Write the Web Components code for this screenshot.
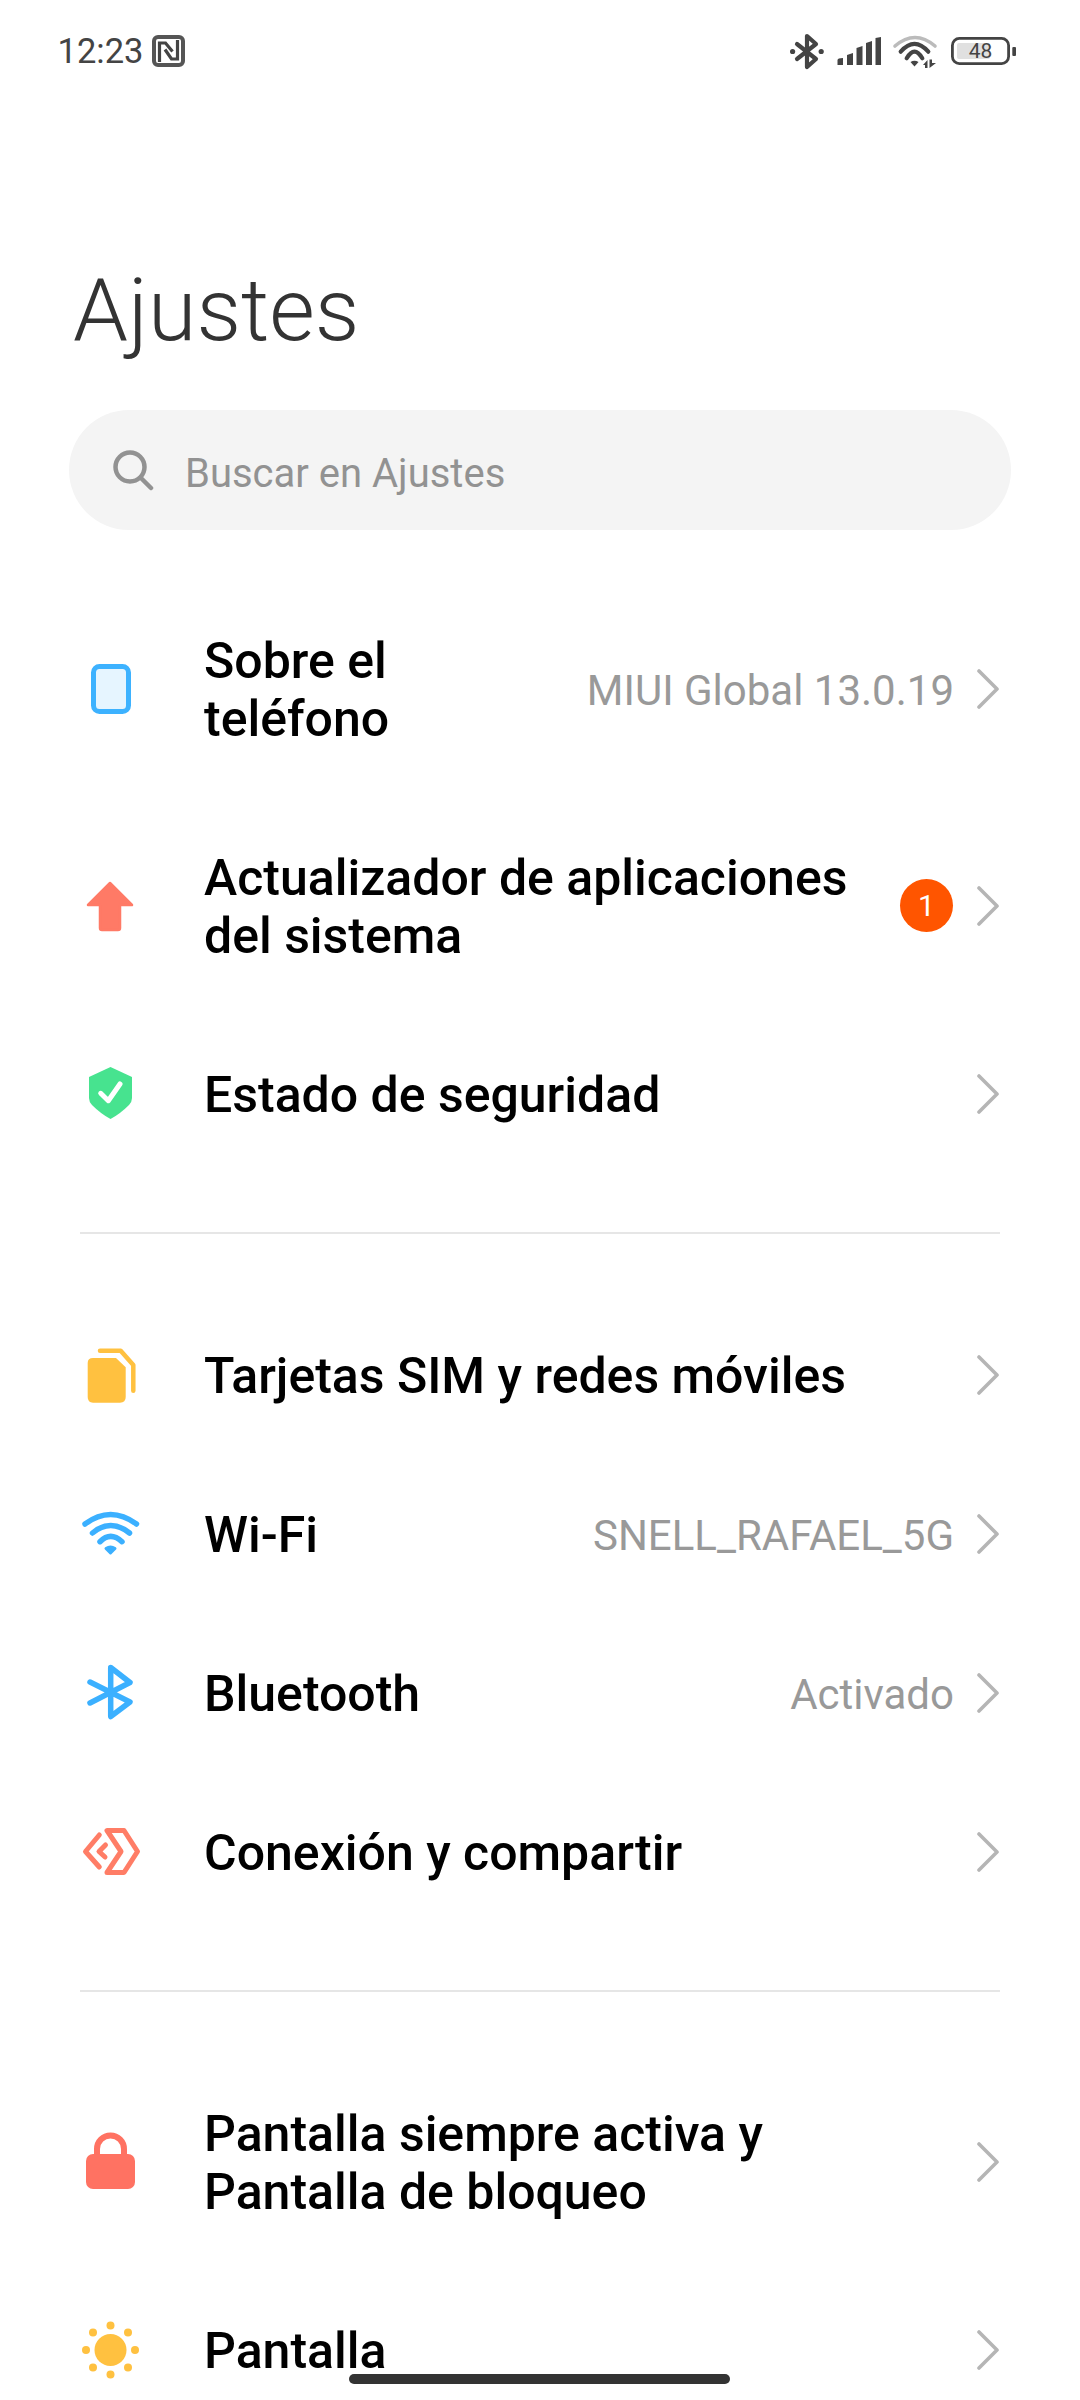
<!DOCTYPE html>
<html lang="es">
<head>
<meta charset="utf-8">
<title>Ajustes</title>
<style>
  html, body { margin: 0; background: #fff; }
  settings-section:first-of-type { padding-top: 50px; }
</style>
</head>
<body>
<settings-screen>
  <status-bar time="12:23" battery="48"></status-bar>
  <page-title>Ajustes</page-title>
  <search-box placeholder="Buscar en Ajustes"></search-box>

  <settings-section>
    <settings-row>
      <app-icon slot="icon" name="phone"></app-icon>
      Sobre el<br>teléfono
      <span slot="value">MIUI Global 13.0.19</span>
    </settings-row>
    <settings-row>
      <app-icon slot="icon" name="update"></app-icon>
      Actualizador de aplicaciones<br>del sistema
      <count-badge slot="value">1</count-badge>
    </settings-row>
    <settings-row>
      <app-icon slot="icon" name="shield"></app-icon>
      Estado de seguridad
    </settings-row>
  </settings-section>

  <section-divider></section-divider>

  <settings-section>
    <settings-row>
      <app-icon slot="icon" name="sim"></app-icon>
      Tarjetas SIM y redes móviles
    </settings-row>
    <settings-row>
      <app-icon slot="icon" name="wifi"></app-icon>
      Wi-Fi
      <span slot="value">SNELL_RAFAEL_5G</span>
    </settings-row>
    <settings-row>
      <app-icon slot="icon" name="bluetooth"></app-icon>
      Bluetooth
      <span slot="value">Activado</span>
    </settings-row>
    <settings-row>
      <app-icon slot="icon" name="share"></app-icon>
      Conexión y compartir
    </settings-row>
  </settings-section>

  <section-divider></section-divider>

  <settings-section>
    <settings-row>
      <app-icon slot="icon" name="lock"></app-icon>
      Pantalla siempre activa y<br>Pantalla de bloqueo
    </settings-row>
    <settings-row>
      <app-icon slot="icon" name="sun"></app-icon>
      Pantalla
    </settings-row>
  </settings-section>

  <home-bar></home-bar>
</settings-screen>

<script>
const ICONS = {
  phone: `<rect x="15.5" y="9.5" width="35" height="45" rx="6" fill="#e6f5ff" stroke="#3db2ff" stroke-width="5"/>`,
  update: `<path d="M32 9 L54 31 H42 V54 Q42 56 40 56 H24 Q22 56 22 54 V31 H10 Z" fill="#ff7a66" stroke="#ff7a66" stroke-width="2.5" stroke-linejoin="round"/>`,
  shield: `<path d="M32.5 5 L54 15 V36 Q54 40 51 43 Q42 52 32.5 57 Q23 52 14 43 Q11 40 11 36 V15 Z" fill="#47e38f"/>
    <path d="M22.7 31.3 L30.3 38.7 L42 22" fill="none" stroke="#fff" stroke-width="5" stroke-linecap="round" stroke-linejoin="round"/>`,
  sim: `<path d="M15 15 H38 L47.7 24.3 V54 Q47.7 59.7 42 59.7 H15 Q9.7 59.7 9.7 54 V20 Q9.7 15 15 15 Z" fill="#ffc140"/>
    <path d="M22 7.7 H42.7 L55.3 22 V47.7" fill="none" stroke="#ffc140" stroke-width="4.5" stroke-linecap="round" stroke-linejoin="round"/>`,
  wifi: `<g fill="none" stroke="#3bb0ff" stroke-width="5.5" stroke-linecap="round">
      <path d="M7 22 Q32.5 3 58.5 22"/>
      <path d="M14.5 31 Q32.5 16 51.5 31"/>
      <path d="M22 39.7 Q32.5 29 44 39.7"/>
    </g>
    <path d="M28 46.5 Q32.5 43.5 37 46.5 L32.5 51 Z" fill="#3bb0ff" stroke="#3bb0ff" stroke-width="3" stroke-linejoin="round"/>`,
  bluetooth: `<path d="M12 21 L52 41 L32.7 55.5 V6.5 L52 21.5 L12 42" fill="none" stroke="#3bb0ff" stroke-width="5.5" stroke-linecap="round" stroke-linejoin="round"/>`,
  share: `<g fill="none" stroke="#ff7d66" stroke-width="5" stroke-linecap="round" stroke-linejoin="round">
      <path d="M29 10.5 H46 L59.5 31.5 L46 52.5 H29 L43 31.5 Z"/>
      <path d="M21.3 15 L7.5 31.5 L21.3 47"/>
      <path d="M27.5 25 L21 31.5 L27 37"/>
    </g>`,
  lock: `<path d="M19 26 V19 A13.5 13.5 0 0 1 46 19 V26" fill="none" stroke="#ff7262" stroke-width="6"/>
    <rect x="8" y="24" width="49" height="35" rx="7" fill="#ff7262"/>`,
  sun: `<g fill="#ffc140">
      <circle cx="32.5" cy="32" r="16"/>
      <circle cx="32.5" cy="7.5" r="4"/><circle cx="32.5" cy="56.5" r="4"/>
      <circle cx="8" cy="32" r="4"/><circle cx="57" cy="32" r="4"/>
      <circle cx="15" cy="14.5" r="4"/><circle cx="50" cy="14.5" r="4"/>
      <circle cx="15" cy="49.5" r="4"/><circle cx="50" cy="49.5" r="4"/>
    </g>`
};

class SettingsScreen extends HTMLElement {
  constructor() {
    super();
    this.attachShadow({ mode: 'open' }).innerHTML = `
      <style>
        :host {
          display: flex;
          flex-direction: column;
          position: relative;
          height: 2400px;
          overflow: hidden;
          background: #fff;
          font-family: Roboto, "Liberation Sans", sans-serif;
        }
      </style>
      <slot></slot>
    `;
  }
}

class StatusBar extends HTMLElement {
  constructor() {
    super();
    this.attachShadow({ mode: 'open' });
  }

  connectedCallback() {
    this.shadowRoot.innerHTML = `
      <style>
        :host {
          display: flex;
          flex: none;
          align-items: center;
          height: 102px;
          padding: 0 64px 0 57.5px;
          color: #444;
        }
        .time { font-size: 34.5px; }
        .nfc { margin-left: 9px; }
        .right { display: flex; align-items: center; margin-left: auto; }
        svg { display: block; flex: none; }
        .signal { margin-left: 13px; }
        .wifi { margin-left: 12px; }
        .battery { position: relative; margin-left: 14px; width: 65px; height: 28px; }
        .battery span {
          position: absolute;
          left: 0;
          width: 59px;
          top: 0;
          line-height: 29px;
          text-align: center;
          font-size: 21px;
          color: #444;
        }
      </style>
      <span class="time">${this.getAttribute('time')}</span>
      <svg class="nfc" width="33" height="32" viewBox="0 0 33 32">
        <rect x="2" y="2" width="29" height="28" rx="4" fill="none" stroke="#555" stroke-width="4"/>
        <path d="M7.5 27 V8 H13.5 L20.5 16.5 M25.5 5 V24 H19.5 L13 14.5" fill="none" stroke="#444" stroke-width="3.2"/>
      </svg>
      <div class="right">
        <svg width="34" height="37" viewBox="0 0 34 37">
          <path d="M7 11 L26 26 L17 34 V3 L26 11 L7 26" fill="none" stroke="#444" stroke-width="4.2" stroke-linejoin="round" stroke-linecap="round"/>
          <circle cx="2.6" cy="18.5" r="2.6" fill="#444"/>
          <circle cx="31.2" cy="18.5" r="2.6" fill="#444"/>
        </svg>
        <svg class="signal" width="44" height="28" viewBox="0 0 44 28">
          <path d="M0.5 23 Q0.5 21 6 21 V28 H0.5 Z M10 18 L16 16 V28 H10 Z M19.5 11 L25.5 9 V28 H19.5 Z M29 6 L35 4 V28 H29 Z M38.5 1 L44 0 V28 H38.5 Z" fill="#444"/>
        </svg>
        <svg class="wifi" width="44" height="32" viewBox="0 0 44 32" style="overflow: visible">
          <g fill="none" stroke-linecap="round">
            <path d="M2 11 Q22 -6 42 11" stroke="#bbb" stroke-width="3.6"/>
            <path d="M7.7 16.7 Q21.5 1 35.3 16.7" stroke="#444" stroke-width="4.2"/>
            <path d="M13.7 23.3 Q21.5 10 29.3 23.3" stroke="#444" stroke-width="4.2"/>
          </g>
          <path d="M17.5 27 Q21.5 24.5 25.5 27 L21.5 31.5 Z" fill="#444"/>
          <path d="M30 30 L34.5 25 V33 H32 V30 Z M36.5 24.5 H39 V28 H43 L36.5 33 Z" fill="#444"/>
        </svg>
        <div class="battery">
          <svg width="65" height="28" viewBox="0 0 65 28">
            <rect x="6" y="6" width="33" height="16" rx="2" fill="#e0e0e0"/>
            <rect x="1.4" y="1.4" width="56.2" height="25.2" rx="7" fill="none" stroke="#444" stroke-width="2.8"/>
            <rect x="61.3" y="10" width="3.7" height="9" rx="1" fill="#444"/>
          </svg>
          <span>${this.getAttribute('battery')}</span>
        </div>
      </div>
    `;
  }
}

class PageTitle extends HTMLElement {
  constructor() {
    super();
    this.attachShadow({ mode: 'open' }).innerHTML = `
      <style>
        :host {
          display: block;
          flex: none;
          padding: 158px 0 0 73px;
          font-size: 88px;
          font-weight: 300;
          line-height: 100px;
          color: #333;
        }
      </style>
      <slot></slot>
    `;
  }
}

class SearchBox extends HTMLElement {
  constructor() {
    super();
    this.attachShadow({ mode: 'open' });
  }

  connectedCallback() {
    this.shadowRoot.innerHTML = `
      <style>
        :host {
          display: flex;
          flex: none;
          align-items: center;
          box-sizing: border-box;
          height: 120px;
          margin: 50px 69px 0;
          padding-left: 43px;
          border-radius: 60px;
          background: #f4f4f4;
          font-size: 40px;
          color: #929292;
        }
        svg { flex: none; display: block; margin-right: 31px; }
        span { position: relative; top: 3px; }
      </style>
      <svg width="42" height="42" viewBox="0 0 42 42">
        <circle cx="18" cy="18" r="14.5" fill="none" stroke="#929292" stroke-width="4.5"/>
        <path d="M28.5 28.5 L39 39" stroke="#929292" stroke-width="4.5" stroke-linecap="round"/>
      </svg>
      <span>${this.getAttribute('placeholder')}</span>
    `;
  }
}

class SettingsSection extends HTMLElement {
  constructor() {
    super();
    this.attachShadow({ mode: 'open' }).innerHTML = `
      <style>
        :host { display: flex; flex: none; flex-direction: column; }
      </style>
      <slot></slot>
    `;
  }
}

class SettingsRow extends HTMLElement {
  constructor() {
    super();
    this.attachShadow({ mode: 'open' }).innerHTML = `
      <style>
        :host {
          display: flex;
          align-items: center;
          padding: 0 80px 0 78px;
        }
        .icon { flex: none; width: 64px; height: 64px; margin-right: 62px; }
        .title {
          flex: 1;
          padding: 52px 0 49px;
          font-size: 50px;
          font-weight: 500;
          line-height: 58px;
          color: #000;
        }
        .value {
          flex: none;
          margin-right: 22px;
          font-size: 42px;
          color: #999;
        }
        ::slotted(span) { display: block; padding-top: 3px; }
        svg { flex: none; display: block; }
      </style>
      <div class="icon"><slot name="icon"></slot></div>
      <div class="title"><slot></slot></div>
      <div class="value"><slot name="value"></slot></div>
      <svg width="24" height="40" viewBox="0 0 24 40">
        <path d="M3 2 L21 20 L3 38" fill="none" stroke="#b5b5b5" stroke-width="3.6" stroke-linecap="round" stroke-linejoin="round"/>
      </svg>
    `;
  }
}

class AppIcon extends HTMLElement {
  constructor() {
    super();
    this.attachShadow({ mode: 'open' });
  }

  connectedCallback() {
    this.shadowRoot.innerHTML = `
      <style>
        :host { display: block; width: 64px; height: 64px; }
        svg { display: block; overflow: visible; }
      </style>
      <svg width="64" height="64" viewBox="0 0 64 64">${ICONS[this.getAttribute('name')]}</svg>
    `;
  }
}

class CountBadge extends HTMLElement {
  constructor() {
    super();
    this.attachShadow({ mode: 'open' }).innerHTML = `
      <style>
        :host {
          display: flex;
          align-items: center;
          justify-content: center;
          width: 53px;
          height: 53px;
          margin-right: 1px;
          border-radius: 50%;
          background: #ff5500;
          color: #fff;
          font-size: 30px;
        }
      </style>
      <slot></slot>
    `;
  }
}

class SectionDivider extends HTMLElement {
  constructor() {
    super();
    this.attachShadow({ mode: 'open' }).innerHTML = `
      <style>
        :host {
          display: block;
          flex: none;
          height: 2px;
          margin: 59px 80px 61px;
          background: #e6e6e6;
        }
      </style>
    `;
  }
}

class HomeBar extends HTMLElement {
  constructor() {
    super();
    this.attachShadow({ mode: 'open' }).innerHTML = `
      <style>
        :host {
          position: absolute;
          left: 349px;
          bottom: 16px;
          width: 381px;
          height: 10px;
          border-radius: 5px;
          background: #333;
        }
      </style>
    `;
  }
}

customElements.define('settings-screen', SettingsScreen);
customElements.define('status-bar', StatusBar);
customElements.define('page-title', PageTitle);
customElements.define('search-box', SearchBox);
customElements.define('settings-section', SettingsSection);
customElements.define('settings-row', SettingsRow);
customElements.define('app-icon', AppIcon);
customElements.define('count-badge', CountBadge);
customElements.define('section-divider', SectionDivider);
customElements.define('home-bar', HomeBar);
</script>
</body>
</html>
